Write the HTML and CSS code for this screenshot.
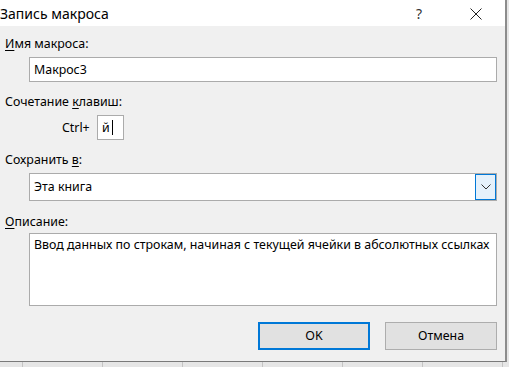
FILE: index.html
```html
<!DOCTYPE html>
<html lang="ru">
<head>
<meta charset="utf-8">
<title>Запись макроса</title>
<link rel="stylesheet" href="styles.css">
</head>
<body>
<div class="dialog">
  <div class="titlebar">
    <span class="title">Запись макроса</span>
    <span class="help">?</span>
    <span class="close">
      <svg width="12" height="12" viewBox="0 0 12 12"><path d="M0.5 0.5 L11.5 11.5 M11.5 0.5 L0.5 11.5" stroke="#222" stroke-width="1" fill="none"/></svg>
    </span>
  </div>
  <div class="content">
    <div class="label l1"><u>И</u>мя макроса:</div>
    <div class="field input1"><span>Макрос3</span></div>

    <div class="label l2">Сочетание <u>к</u>лавиш:</div>
    <div class="keyrow">
      <span class="ctrl">Ctrl+</span>
      <span class="keybox"><span>й</span><span class="caret"></span></span>
    </div>

    <div class="label l3">Сохранить <u>в</u>:</div>
    <div class="field select">
      <span class="seltext">Эта книга</span>
      <span class="dropbtn">
        <svg width="10" height="6" viewBox="0 0 10 6"><path d="M0.5 0.5 L5 5 L9.5 0.5" stroke="#333" stroke-width="1" fill="none"/></svg>
      </span>
    </div>

    <div class="label l4"><u>О</u>писание:</div>
    <div class="field textarea">Ввод данных по строкам, начиная с текущей ячейки в абсолютных ссылках</div>

    <div class="buttons">
      <button class="btn ok">OK</button>
      <button class="btn">Отмена</button>
    </div>
  </div>
</div>
</body>
</html>
```

FILE: styles.css
```css
html, body {
  margin: 0;
  padding: 0;
}
body {
  width: 509px;
  height: 367px;
  overflow: hidden;
  background-color: #e6e6e6;
  background-image: repeating-linear-gradient(to right, transparent 0, transparent 22px, #c4c4c4 22px, #c4c4c4 23px, transparent 23px, transparent 80px);
  font-family: "Noto Sans", "Open Sans", sans-serif;
  font-size: 12.4px;
  color: #000;
}
.dialog {
  width: 505px;
  height: 361px;
  background: #f0f0f0;
  border-right: 2px solid #8c8c8c;
  border-bottom: 1px solid #7a7a7a;
  box-sizing: content-box;
}
.titlebar {
  height: 26px;
  background: #fff;
  display: flex;
  align-items: center;
}
.title {
  font-size: 14px;
  flex: 1;
  padding-top: 1px;
}
.help {
  font-size: 14px;
  color: #333;
  width: 54px;
  padding-top: 1px;
}
.close {
  width: 35px;
  display: flex;
  align-items: center;
  padding-top: 2px;
}
.content {
  padding: 10px 8px 0 5px;
}
.label {
  line-height: 16px;
  height: 16px;
  white-space: nowrap;
}
.label u {
  text-underline-offset: 2px;
}
.field {
  margin-left: 24px;
  background: #fff;
  border: 1px solid #ababab;
  box-sizing: border-box;
  display: flex;
  align-items: center;
  line-height: 16px;
}
.input1 {
  margin-top: 5px;
  height: 25px;
  padding-left: 4px;
}
.l2 { margin-top: 12px; }
.keyrow {
  margin-top: 5px;
  height: 25px;
  display: flex;
  align-items: center;
  margin-left: 57px;
}
.ctrl {
  line-height: 16px;
  width: 35px;
}
.keybox {
  width: 27px;
  height: 25px;
  box-sizing: border-box;
  background: #fff;
  border: 1px solid #ababab;
  display: flex;
  align-items: center;
  padding-left: 4px;
  line-height: 16px;
}
.caret {
  display: inline-block;
  width: 1px;
  height: 15px;
  background: #000;
  margin-left: 2px;
}
.l3 { margin-top: 12px; }
.select {
  margin-top: 5px;
  height: 28px;
  padding-left: 4px;
  justify-content: space-between;
}
.dropbtn {
  width: 21px;
  height: 26px;
  box-sizing: border-box;
  border: 1px solid #0078d7;
  background: #e5f1fb;
  display: flex;
  align-items: center;
  justify-content: center;
}
.l4 { margin-top: 13px; }
.textarea {
  margin-top: 3px;
  height: 73px;
  padding: 3px 4px 0 4px;
  align-items: flex-start;
  white-space: nowrap;
}
.buttons {
  margin-top: 16px;
  display: flex;
  justify-content: flex-end;
  gap: 15px;
}
.btn {
  width: 112px;
  height: 28px;
  box-sizing: border-box;
  background: #e1e1e1;
  border: 1px solid #adadad;
  font-family: "Noto Sans", "Open Sans", sans-serif;
  font-size: 12.4px;
  color: #000;
  padding: 0;
  line-height: 16px;
}
.btn.ok {
  border: 2px solid #0078d7;
}
```
